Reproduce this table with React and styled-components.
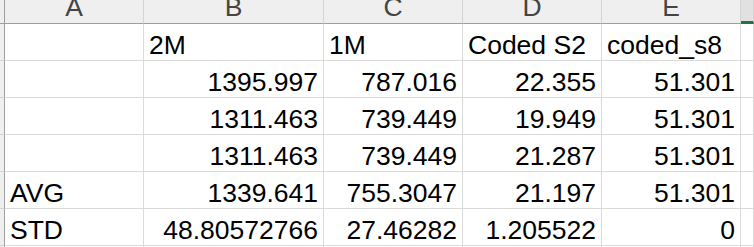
import React from "react";
import styled, { createGlobalStyle } from "styled-components";

const Global = createGlobalStyle`
  html, body { margin: 0; padding: 0; background: #ffffff; overflow: hidden; }
  body { font-family: "Liberation Sans", Arial, sans-serif; }
`;

const Sheet = styled.div`
  display: grid;
  grid-template-columns: 5px 139px 180px 139px 139px 139px 1fr;
  grid-template-rows: 24px repeat(7, 37px);
  width: 754px;
  height: 247px;
  overflow: hidden;
  font-family: "Liberation Sans", Arial, sans-serif;
`;

const Corner = styled.div`
  background: #efefef;
  box-sizing: border-box;
  border-right: 1px solid #9e9e9e;
  border-bottom: 1px solid #9e9e9e;
`;

const ColHead = styled.div`
  box-sizing: border-box;
  background: ${(p) => (p.$selected ? "#e1e1e1" : "#efefef")};
  border-right: 1px solid #d4d4d4;
  border-bottom: ${(p) => (p.$selected ? "3px solid #217346" : "1px solid #9e9e9e")};
  color: #444444;
  font-size: 26.5px;
  line-height: 30px;
  display: flex;
  align-items: flex-end;
  justify-content: center;
  padding-bottom: ${(p) => (p.$selected ? "0" : "1px")};
  overflow: hidden;
`;

const RowHead = styled.div`
  box-sizing: border-box;
  background: #efefef;
  border-right: 1px solid #9e9e9e;
  border-bottom: 1px solid #d4d4d4;
`;

const Cell = styled.div`
  box-sizing: border-box;
  border-right: 1px solid #dadada;
  border-bottom: 1px solid #dadada;
  color: #000000;
  font-size: 26.5px;
  line-height: 30px;
  display: flex;
  align-items: flex-end;
  justify-content: ${(p) => (p.$num ? "flex-end" : "flex-start")};
  padding: 0 ${(p) => (p.$num ? "5px" : "0")} 0 ${(p) => (p.$num ? "0" : "5px")};
  white-space: nowrap;
  overflow: hidden;
`;

const cols = ["A", "B", "C", "D", "E", "F"];

const rows = [
  ["", "2M", "1M", "Coded S2", "coded_s8", ""],
  ["", 1395.997, 787.016, 22.355, 51.301, ""],
  ["", 1311.463, 739.449, 19.949, 51.301, ""],
  ["", 1311.463, 739.449, 21.287, 51.301, ""],
  ["AVG", 1339.641, 755.3047, 21.197, 51.301, ""],
  ["STD", 48.80572766, 27.46282, 1.205522, 0, ""],
  ["", "", "", "", "", ""],
];

export default function App() {
  return (
    <>
      <Global />
      <Sheet>
        <Corner />
        {cols.map((c) => (
          <ColHead key={c} $selected={c === "F"}>
            {c === "F" ? "" : c}
          </ColHead>
        ))}
        {rows.map((r, i) => (
          <React.Fragment key={i}>
            <RowHead />
            {r.map((v, j) => (
              <Cell key={j} $num={typeof v === "number"}>
                {String(v)}
              </Cell>
            ))}
          </React.Fragment>
        ))}
      </Sheet>
    </>
  );
}
